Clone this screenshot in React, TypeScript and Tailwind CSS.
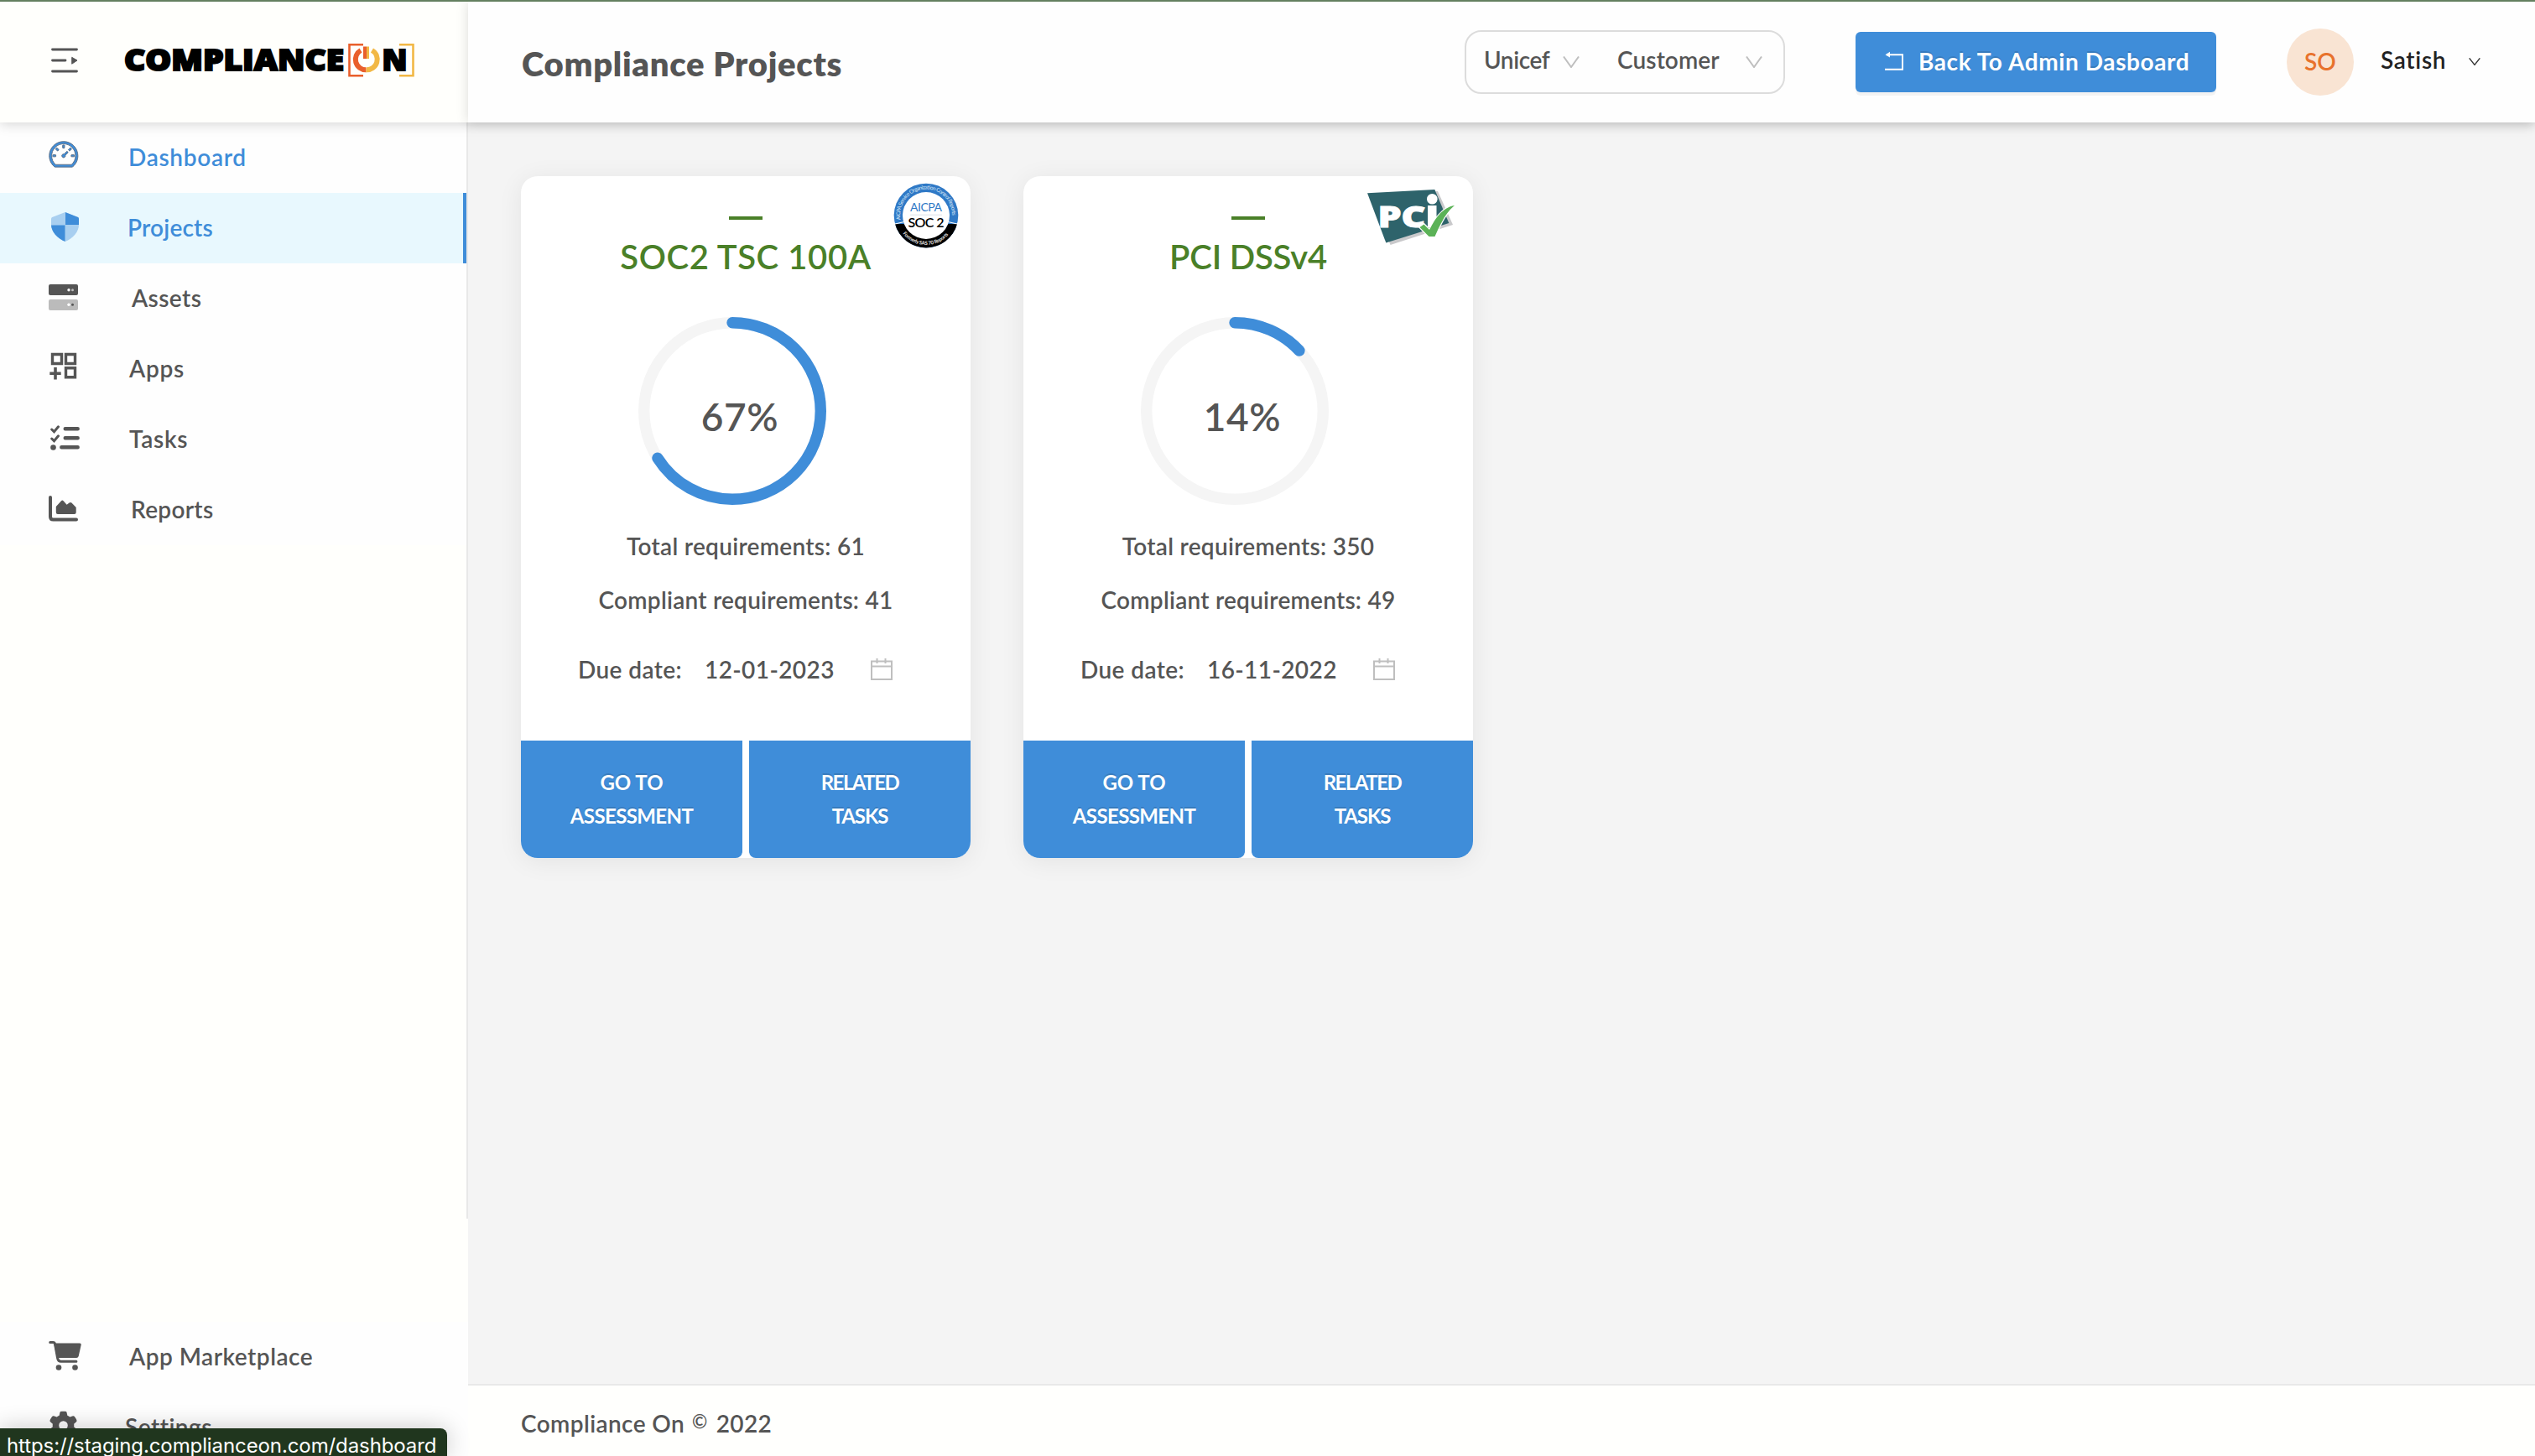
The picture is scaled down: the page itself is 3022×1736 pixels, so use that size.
import type { ReactNode } from "react";
import { AiOutlineDashboard } from "react-icons/ai";
import { FaGear } from "react-icons/fa6";

const GRAY = "#555555";
const BLUE = "#3f8dd9";

function IconBox({ children }: { children: ReactNode }) {
  return (
    <svg className="ml-[50px] h-12 w-12 shrink-0 overflow-visible" viewBox="0 0 48 48" fill="none">
      {children}
    </svg>
  );
}

const icons: Record<string, ReactNode> = {
  dashboard: (
    <AiOutlineDashboard x="6.3" y="0.4" size={39} color={BLUE} stroke="#5b6b80" strokeWidth={24} />
  ),
  projects: (
    <>
      <clipPath id="shield">
        <path d="M27.700 5 43 11q1 .5 1 2v7c0 8-7 16.500-16.300 20C18.500 36.500 11 28 11 20v-7q0-1.500 1.200-2Z" />
      </clipPath>
      <g clipPath="url(#shield)">
        <path d="M10 4h35v37H10z" fill="#a8cff0" />
        <path d="M28 4h18v16H28zM10 20.500h17.500V42H10z" fill={BLUE} />
      </g>
    </>
  ),
  assets: (
    <>
      <rect x="8" y="7" width="35" height="13" rx="2" fill={GRAY} />
      <rect x="8" y="25" width="35" height="13" rx="2" fill="#bbbbbb" />
      <circle cx="32" cy="13.700" r="1.700" fill="#fff" />
      <circle cx="36.500" cy="13.700" r="1.500" fill="#bbbbbb" />
      <circle cx="32" cy="31.200" r="1.700" fill="#fff" />
      <circle cx="36.500" cy="31.200" r="1.500" fill={GRAY} />
    </>
  ),
  apps: (
    <g stroke={GRAY} strokeWidth="3.400">
      <path d="M12.500 6.500h11v11h-11zM28.500 6.500h11v11h-11zM28.500 22.700h11v11h-11z" />
      <path d="M9.300 29.200h13.400M16 22v14.500" strokeWidth="3.600" />
    </g>
  ),
  tasks: (
    <g stroke={GRAY} strokeLinecap="round" strokeWidth="4.400">
      <path d="M27.700 11.300h15M27.700 22.300h15M23.300 33.300h19.400" />
      <path d="m11.700 12 2.800 2.800 5-6M11.700 23 14.500 25.800l5-6" strokeWidth="3" />
      <circle cx="13.500" cy="33.500" r="3.300" fill={GRAY} stroke="none" />
    </g>
  ),
  reports: (
    <>
      <path d="M10 9v23q0 3.500 3.500 3.500H41" stroke={GRAY} strokeWidth="4" strokeLinecap="round" />
      <path d="M16.800 20 23 13.200q1.300-1.300 2.600 0l4 4.500 3-2.300q1.500-1 2.800.2L40.700 21v6q0 2-2 2H18.800q-2 0-2-2Z" fill={GRAY} />
    </>
  ),
  cart: (
    <>
      <path d="M9.700 6.600h3.500q2 0 2.400 2.200l3 16.500q.7 4 4 4h18.300" stroke={GRAY} strokeWidth="3" strokeLinecap="round" />
      <path d="M14 7.500h31q2 0 1.700 2l-3 13.500q-.600 2-2.500 2H18Z" fill={GRAY} />
      <circle cx="20" cy="36.500" r="3.300" fill={GRAY} />
      <circle cx="39.500" cy="36.500" r="3.300" fill={GRAY} />
    </>
  ),
  settings: <FaGear x="8.500" y="4.500" size={34} color={GRAY} />,
};

function NavItem({ icon, label, gap, active, blue }: { icon: string; label: string; gap: string; active?: boolean; blue?: boolean }) {
  return (
    <div className={`flex h-[84px] w-full shrink-0 items-center ${active ? "border-r-4 border-[#3f8dd9] bg-[#e8f8fe]" : "bg-[#fefefe]"}`}>
      <IconBox>{icons[icon]}</IconBox>
      <span className={`pb-0.5 text-[28px] font-semibold leading-[34px] ${gap} ${blue ? "text-[#3f8dd9]" : ""}`}>{label}</span>
    </div>
  );
}

function Logo() {
  return (
    <svg className="mb-1 ml-[52px] h-[42px] w-[348px]" viewBox="145 52 348 42" fill="none" fontFamily="Open Sans">
      <text x="147" y="85.300" fontSize="34.500" fontWeight="800" fill="#000" stroke="#000" strokeWidth="2" textLength="262" lengthAdjust="spacingAndGlyphs">
        COMPLIANCE
      </text>
      <path d="M432 54.200h-16.500v37H432" stroke="#e95f2b" strokeWidth="2.600" />
      <path d="M475 54.200h16.500v37H475" stroke="#f2b845" strokeWidth="2.600" />
      <path d="M429 61A12.500 12.500 0 0 0 435.500 84.300" stroke="#e95f2b" strokeWidth="6" />
      <path d="M435.500 84.300A12.500 12.500 0 0 0 442.500 61" stroke="#f2b845" strokeWidth="6" />
      <path d="M432 56.500h4V71h-4z" fill="#e95f2b" />
      <path d="M436 56.500h3V71h-3z" fill="#f2b845" />
      <text x="454.500" y="85.300" fontSize="34.500" fontWeight="800" fill="#000" stroke="#000" strokeWidth="2" textLength="30" lengthAdjust="spacingAndGlyphs">
        N
      </text>
    </svg>
  );
}

function Chevron({ className }: { className: string }) {
  return (
    <svg className={className} viewBox="0 0 20 14" fill="none" stroke="currentColor" strokeWidth="2" preserveAspectRatio="none">
      <path d="M1 .5 10 13 19 .5" />
    </svg>
  );
}

function SocBadge() {
  return (
    <svg className="absolute right-[14px] top-[8px] h-[78px] w-[78px]" viewBox="-39 -39 78 78" fill="none">
      <circle r="38.300" fill="#2f79c6" />
      <path d="M-37 10A38.300 38.300 0 0 0 37 10Z" fill="#000" />
      <path d="M-37 10 -26 7.500M37 10 26 7.500" stroke="#fff" strokeWidth="1.200" />
      <circle r="28" fill="#fff" />
      <path id="socTop" d="M-30.500 5A31 31 0 1 1 30.500 5" />
      <path id="socBottom" d="M-31.500 15.500A35.200 35.200 0 0 0 31.500 15.500" />
      <text fontSize="6.500" fill="#d6e6f6">
        <textPath href="#socTop" textLength="103">AICPA Service Organization Control Reports</textPath>
      </text>
      <text fontSize="6" fontWeight="700" fill="#e5e5e5">
        <textPath href="#socBottom" startOffset="7" textLength="62">Formerly SAS 70 Reports</textPath>
      </text>
      <text x="-19" y="-5" fontSize="14" fill="#2f79c6" textLength="38">AICPA</text>
      <path d="M-19-.8h38" stroke="#dde3ea" strokeWidth="1" />
      <text x="-21.500" y="14.300" fontSize="16" fontWeight="600" fill="#000" textLength="43">SOC 2</text>
    </svg>
  );
}

function PciBadge() {
  return (
    <svg className="absolute right-[20px] top-[14px] h-[70px] w-[108px]" viewBox="1628 224 108 70">
      <path d="m1634 232 80-4 18 40-74.500 24Z" fill="#c9c9cb" />
      <path d="m1630 230.300 80.300-4.300 17 40-75 23.500Z" fill="#2e636b" />
      <text x="1642.500" y="271.200" fontFamily="Open Sans" fontSize="36" fontWeight="800" fill="#fff" stroke="#fff" strokeWidth="1" textLength="57" lengthAdjust="spacingAndGlyphs">
        PC
      </text>
      <circle cx="1707.300" cy="237.300" r="6.300" fill="#fff" />
      <path d="M1702 245h10.500v26H1702z" fill="#fff" />
      <path d="m1692.500 271 5-3.500 6.500 6.500c8-16 17-27 30-29-10 8-16 20-23.500 37h-7Z" fill="#5bb257" stroke="#fff" strokeWidth="2.500" paintOrder="stroke" />
    </svg>
  );
}

function Ring({ percent }: { percent: number }) {
  return (
    <div className="relative ml-[140px] mt-[50px] h-[224px] w-[224px]">
      <svg className="h-full w-full -rotate-90" viewBox="0 0 224 224" fill="none" strokeWidth="13.400">
        <circle cx="112" cy="112" r="105.300" stroke="#f5f5f5" />
        <circle cx="112" cy="112" r="105.300" stroke={BLUE} strokeLinecap="round" pathLength="100" strokeDasharray={`${percent - 0.97} 100`} />
      </svg>
      <div className="absolute inset-0 flex items-center justify-center pl-[18px] pt-[13px] text-[46px] font-semibold leading-none tracking-[0.6px]">{percent}%</div>
    </div>
  );
}

function CalendarIcon() {
  return (
    <svg className="h-7 w-7" viewBox="0 0 28 28" fill="none" stroke="#bfbfbf" strokeWidth="2">
      <path d="M2 4.500h24V26H2zM2 10.500h24M8.500 1v6M18.500 1v6" />
    </svg>
  );
}

interface Project {
  title: string;
  titleTracking: string;
  percent: number;
  total: number;
  compliant: number;
  due: string;
  badge: ReactNode;
}

const projects: Project[] = [
  { title: "SOC2 TSC 100A", titleTracking: "tracking-[0.6px]", percent: 67, total: 61, compliant: 41, due: "12-01-2023", badge: <SocBadge /> },
  { title: "PCI DSSv4", titleTracking: "tracking-[-0.2px]", percent: 14, total: 350, compliant: 49, due: "16-11-2022", badge: <PciBadge /> },
];

const buttonClass =
  "flex-1 text-center text-2xl font-bold leading-[40px] text-white [text-shadow:0_-2px_0_rgba(0,0,0,0.12)] pt-[30px]";

function ProjectCard({ p }: { p: Project }) {
  return (
    <article className="relative flex h-[813px] w-[536px] flex-col rounded-[20px] bg-white pt-12 shadow-[0_4px_30px_rgba(0,0,0,0.07)]">
      {p.badge}
      <div className="h-1 w-10 shrink-0 self-center bg-[#4a8028]" />
      <h2 className={`mt-5 text-center text-[40px] font-semibold leading-[48px] text-[#4a8028] ${p.titleTracking}`}>{p.title}</h2>
      <div className="-mt-0.5">
        <Ring percent={p.percent} />
      </div>
      <div className="mt-8 text-center text-[28px] font-semibold leading-[34px] tracking-[0.3px]">Total requirements: {p.total}</div>
      <div className="mt-[30px] text-center text-[28px] font-semibold leading-[34px] tracking-[0.25px]">Compliant requirements: {p.compliant}</div>
      <div className="mt-[49px] flex items-center pl-[68px] text-[28px] font-semibold leading-[34px] tracking-[0.4px]">
        <span className="w-[151px]">Due date:</span>
        <span className="w-[197px]">{p.due}</span>
        <CalendarIcon />
      </div>
      <div className="mt-auto flex h-[140px] gap-2">
        <button className={`${buttonClass} rounded-bl-[20px] rounded-br-lg bg-[#3f8dd9] pb-[30px]`}>
          <span className="block tracking-[0px]">GO TO</span>
          <span className="block tracking-[-0.6px]">ASSESSMENT</span>
        </button>
        <button className={`${buttonClass} rounded-bl-lg rounded-br-[20px] bg-[#3f8dd9] pb-[30px]`}>
          <span className="block tracking-[-1.500px]">RELATED</span>
          <span className="block tracking-[-1.100px]">TASKS</span>
        </button>
      </div>
    </article>
  );
}

export default function App() {
  return (
    <div className="relative flex h-[1736px] w-[3022px] flex-col overflow-hidden border-t-2 border-[#648060] bg-[#f4f4f4] font-['Lato',sans-serif] text-[#555555]">
      <header className="relative z-10 flex h-36 shrink-0 shadow-[0_2px_14px_rgba(0,0,0,0.17)]">
        <div className="flex w-[558px] items-center bg-[#fffffc]">
          <svg className="mb-1 ml-[60px] h-[34px] w-[34px]" viewBox="0 0 34 34" fill="none" stroke={GRAY} strokeWidth="2.800" strokeLinecap="round">
            <path d="M2.500 4h29M2.500 17h15.500M2.500 30h29" />
            <path d="m26 13.500 6 3.500-6 4Z" fill={GRAY} strokeWidth="1" />
          </svg>
          <Logo />
        </div>
        <div className="flex flex-1 items-center bg-[#fefefe] pl-16 shadow-[0_0_14px_rgba(0,0,0,0.14)]">
          <h1 className="w-[1124px] pt-1 text-[40px] font-extrabold leading-[48px] tracking-[0.7px]">Compliance Projects</h1>
          <div className="flex h-[76px] w-[382px] items-center rounded-[20px] border-2 border-[#dcdcdc] text-[28px] font-semibold leading-[34px]">
            <span className="ml-[21px] w-[94px] pb-1.5 tracking-[-0.400px]">Unicef</span>
            <Chevron className="mr-[45px] h-[14px] w-5 text-[#bfbfbf]" />
            <span className="w-[153px] pb-1.5 tracking-[0.1px]">Customer</span>
            <Chevron className="h-[14px] w-5 text-[#bfbfbf]" />
          </div>
          <button className="ml-[84px] flex h-[72px] w-[430px] items-center rounded-md bg-[#3f8dd9] text-white shadow-[0_4px_0_rgba(0,0,0,0.045)]">
            <svg className="mb-0.5 ml-[34px] h-6 w-6" viewBox="0 0 24 24" fill="none" stroke="#fff" strokeWidth="2">
              <path d="M3 4.200h19v17.500H1" />
              <path d="M1.500 4.200 7 .8v6.800Z" fill="#fff" stroke="none" />
            </svg>
            <span className="ml-[17px] whitespace-nowrap pb-0.5 text-[28px] font-bold leading-[34px] tracking-[0.600px] [text-shadow:0_-2px_0_rgba(0,0,0,0.12)]">Back To Admin Dasboard</span>
          </button>
          <div className="ml-[84px] flex h-20 w-20 items-center justify-center rounded-full bg-[#f9e4d3] pb-0.5 text-[28px] font-semibold text-[#e8722c]">SO</div>
          <span className="ml-8 w-[105px] pb-1.5 text-[28px] font-semibold leading-[34px] tracking-[0.700px] text-[#222222]">Satish</span>
          <Chevron className="mb-0.5 h-[9px] w-[14px] text-[#333333]" />
        </div>
      </header>

      <div className="flex min-h-0 flex-1">
        <aside className="flex w-[558px] flex-col bg-[#fffffc]">
          <nav className="flex h-[1307px] shrink-0 flex-col border-r-2 border-[#e8e8e8] tracking-[0.700px]">
            <NavItem icon="dashboard" label="Dashboard" gap="ml-[55px]" blue />
            <NavItem icon="projects" label="Projects" gap="ml-[54px] tracking-[0.2px]" blue active />
            <NavItem icon="assets" label="Assets" gap="ml-[59px] tracking-[0.400px]" />
            <NavItem icon="apps" label="Apps" gap="ml-[56px]" />
            <NavItem icon="tasks" label="Tasks" gap="ml-[56px]" />
            <NavItem icon="reports" label="Reports" gap="ml-[58px] tracking-[0.3px]" />
          </nav>
          <nav className="mt-[123px] flex flex-col tracking-[0.500px]">
            <NavItem icon="cart" label="App Marketplace" gap="ml-[56px]" />
            <NavItem icon="settings" label="Settings" gap="ml-[51px]" />
          </nav>
        </aside>

        <div className="flex flex-1 flex-col">
          <main className="flex flex-1 items-start gap-[63px] pl-[63px] pt-16">
            {projects.map((p) => (
              <ProjectCard key={p.title} p={p} />
            ))}
          </main>
          <footer className="flex h-[86px] shrink-0 items-start border-t-2 border-[#e8e8e8] bg-[#fffffd] pl-[63px] pt-7 text-[28px] font-semibold leading-[34px] tracking-[0.4px]">
            <span>Compliance On</span>
            <span className="ml-[9px] text-[22px] leading-[30px]">©</span>
            <span className="ml-[10px]">2022</span>
          </footer>
        </div>
      </div>

      <div className="absolute bottom-0 left-0 z-20 h-[33px] w-[533px] rounded-tr-lg bg-[#20361e] pl-2 pt-1.5 font-['Inter',sans-serif] text-2xl leading-[30px] tracking-[-0.100px] text-white shadow-[0_0_28px_rgba(0,0,0,0.22)]">
        https://staging.complianceon.com/dashboard
      </div>
    </div>
  );
}
